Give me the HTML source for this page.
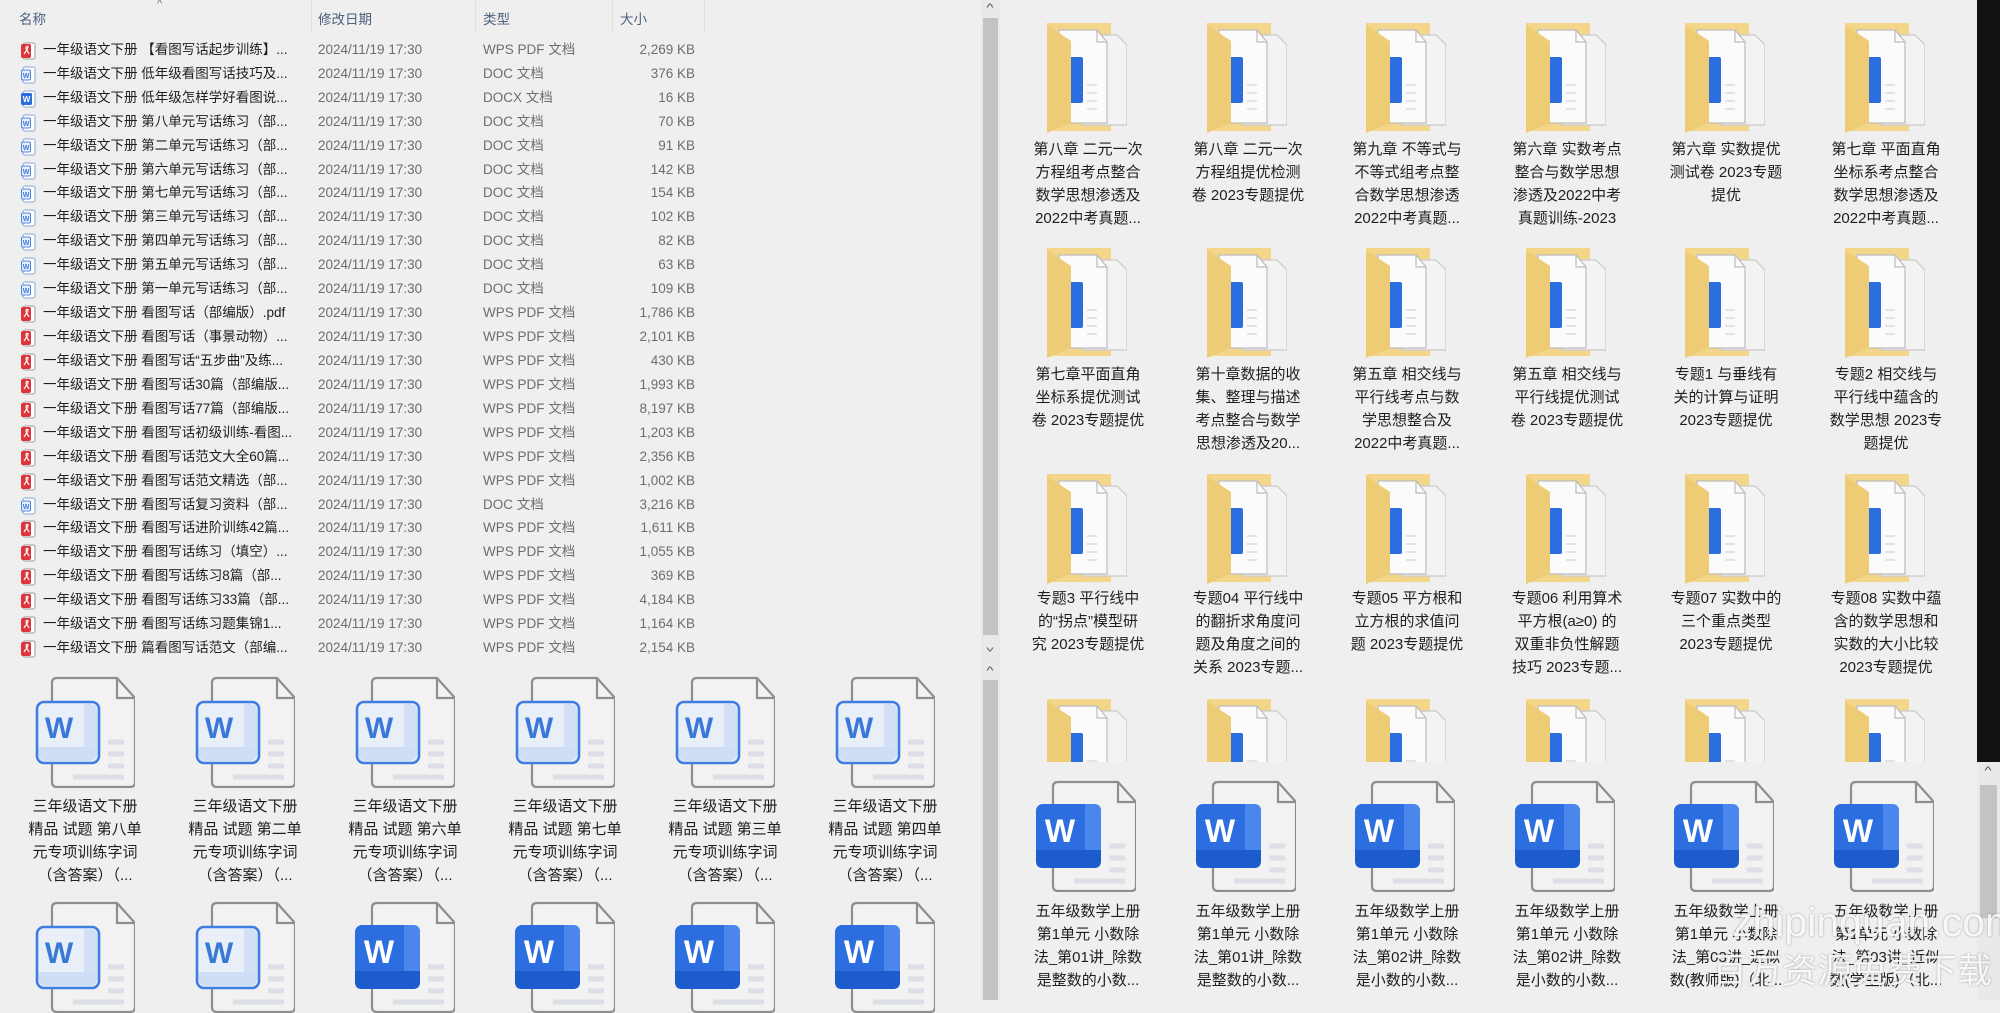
<!DOCTYPE html>
<html><head><meta charset="utf-8">
<style>
*{margin:0;padding:0;box-sizing:border-box}
body{width:2000px;height:1000px;overflow:hidden;background:#efefef;position:relative;font-family:"Liberation Sans","Noto Sans CJK SC",sans-serif;color:#1e1e1e}
.a{position:absolute}
.hd{position:absolute;top:8px;font-size:13.5px;color:#4d6082}
.sep{position:absolute;top:0;width:1px;height:32px;background:#e2e2e2}
.row{position:absolute;left:0;width:980px;height:20px;font-size:13.5px;line-height:20px;white-space:nowrap}
.row svg{position:absolute;left:20px;top:2px}
.row .n{position:absolute;left:43px}
.row .d{position:absolute;left:318px;color:#6d6d6d}
.row .t{position:absolute;left:483px;color:#6d6d6d}
.row .s{position:absolute;right:285px;color:#6d6d6d}
.lb{position:absolute;width:160px;text-align:center;font-size:15px;line-height:23px;color:#1e1e1e;white-space:nowrap}
.ic{position:absolute}
.sb{position:absolute;background:#e9e9e9}
.th{position:absolute;background:#c3c3c3}
.ar{position:absolute;font-size:11px;color:#555;width:18px;text-align:center;transform:scaleX(1.4)}
</style></head><body>
<svg width="0" height="0" style="position:absolute">
<defs>
<symbol id="pdf" viewBox="0 0 16 18"><rect x="3" y="1" width="12" height="16" rx="2" fill="#fff" stroke="#999" stroke-width="1"/><rect x="1" y="2" width="10" height="14" rx="2" fill="#e0343b"/><path d="M4 12 C6 9 8 7 8 5 C8 4 6 4 6 6 C6 8 9 11 9 12" stroke="#fff" stroke-width="1.2" fill="none"/></symbol>
<symbol id="doc" viewBox="0 0 16 18"><rect x="3" y="1" width="12" height="16" rx="2" fill="#fff" stroke="#8aa6d6" stroke-width="1"/><rect x="1.5" y="4" width="9" height="10" rx="1.5" fill="#e6eefb" stroke="#4f86dd" stroke-width="1"/><text x="6" y="12" font-size="7" fill="#3a78d8" text-anchor="middle" font-family="Liberation Sans" font-weight="bold">W</text></symbol>
<symbol id="docx" viewBox="0 0 16 18"><rect x="3" y="1" width="12" height="16" rx="2" fill="#fff" stroke="#8aa6d6" stroke-width="1"/><rect x="1" y="3" width="11" height="12" rx="1.5" fill="#2b6ddf"/><text x="6.5" y="12" font-size="8" fill="#fff" text-anchor="middle" font-family="Liberation Sans" font-weight="bold">W</text></symbol>
<symbol id="fold" viewBox="0 0 80 110">
<path d="M0 0H64V108H0Z" fill="#f3d689"/>
<path d="M36 12H70L80 22V102H36Z" fill="#f3f3f3" stroke="#c9c9c9" stroke-width="1.2"/>
<path d="M12 7H50L60 19V100H12Z" fill="#fbfbfb" stroke="#bcbcbc" stroke-width="1.2"/>
<path d="M50 7V19H60" fill="none" stroke="#bcbcbc" stroke-width="1.2"/>
<rect x="22" y="34" width="14" height="46" rx="2" fill="#2c6de0"/>
<path d="M40 62h10M40 70h10M40 78h10M40 86h10" stroke="#dfe3ea" stroke-width="2"/>
<path d="M0 2L24 18V100L0 110Z" fill="#eecc76"/>
</symbol>
<symbol id="wo" viewBox="0 0 100 112">
<path d="M17 7Q17 2 22 2H82L100 22V106Q100 111 95 111H22Q17 111 17 106Z" fill="#f2f2f2" stroke="#8e8e8e" stroke-width="2.2"/>
<path d="M82 2V22H100" fill="none" stroke="#8e8e8e" stroke-width="2.2"/>
<path d="M73 66h16M73 78h16M73 90h16M38 101h51" stroke="#dcdfe5" stroke-width="5"/>
<rect x="2" y="26" width="62" height="61" rx="7" fill="#e8eff9" stroke="#3f7ee0" stroke-width="2.6"/>
<path d="M49 28h6q7 0 7 7v39h-13z" fill="#d2e0f5"/>
<path d="M3.5 71h58.5v6q0 8-8 8h-42q-8.5 0-8.5-8z" fill="#cfdef4"/>
<text x="24" y="62" font-size="30" font-weight="bold" fill="#3a78d8" text-anchor="middle" font-family="Liberation Sans">W</text>
</symbol>
<symbol id="ws" viewBox="0 0 100 112">
<path d="M17 7Q17 2 22 2H82L100 22V106Q100 111 95 111H22Q17 111 17 106Z" fill="#f2f2f2" stroke="#8e8e8e" stroke-width="2.2"/>
<path d="M82 2V22H100" fill="none" stroke="#8e8e8e" stroke-width="2.2"/>
<path d="M73 66h16M73 78h16M73 90h16M38 101h51" stroke="#dcdfe5" stroke-width="5"/>
<rect x="0" y="24" width="65" height="64" rx="7" fill="#2c6ee0"/>
<path d="M49 24h9q7 0 7 7v42h-16z" fill="#4a86ec"/>
<path d="M0 70h65v11q0 7-7 7h-51q-7 0-7-7z" fill="#1d5ccd"/>
<text x="24" y="62" font-size="32" font-weight="bold" fill="#fff" text-anchor="middle" font-family="Liberation Sans">W</text>
</symbol>
</defs></svg>

<div class="hd" style="left:19px">名称</div>
<div class="a" style="left:157px;top:-2px;font-size:11px;color:#777">^</div>
<div class="sep" style="left:311px"></div>
<div class="hd" style="left:318px">修改日期</div>
<div class="sep" style="left:475px"></div>
<div class="hd" style="left:483px">类型</div>
<div class="sep" style="left:612px"></div>
<div class="hd" style="left:620px">大小</div>
<div class="sep" style="left:704px"></div>

<div class="row" style="top:40px"><svg width="16" height="18"><use href="#pdf"/></svg><span class="n">一年级语文下册 【看图写话起步训练】...</span><span class="d">2024/11/19 17:30</span><span class="t">WPS PDF 文档</span><span class="s">2,269 KB</span></div>
<div class="row" style="top:64px"><svg width="16" height="18"><use href="#doc"/></svg><span class="n">一年级语文下册 低年级看图写话技巧及...</span><span class="d">2024/11/19 17:30</span><span class="t">DOC 文档</span><span class="s">376 KB</span></div>
<div class="row" style="top:88px"><svg width="16" height="18"><use href="#docx"/></svg><span class="n">一年级语文下册 低年级怎样学好看图说...</span><span class="d">2024/11/19 17:30</span><span class="t">DOCX 文档</span><span class="s">16 KB</span></div>
<div class="row" style="top:112px"><svg width="16" height="18"><use href="#doc"/></svg><span class="n">一年级语文下册 第八单元写话练习（部...</span><span class="d">2024/11/19 17:30</span><span class="t">DOC 文档</span><span class="s">70 KB</span></div>
<div class="row" style="top:136px"><svg width="16" height="18"><use href="#doc"/></svg><span class="n">一年级语文下册 第二单元写话练习（部...</span><span class="d">2024/11/19 17:30</span><span class="t">DOC 文档</span><span class="s">91 KB</span></div>
<div class="row" style="top:160px"><svg width="16" height="18"><use href="#doc"/></svg><span class="n">一年级语文下册 第六单元写话练习（部...</span><span class="d">2024/11/19 17:30</span><span class="t">DOC 文档</span><span class="s">142 KB</span></div>
<div class="row" style="top:183px"><svg width="16" height="18"><use href="#doc"/></svg><span class="n">一年级语文下册 第七单元写话练习（部...</span><span class="d">2024/11/19 17:30</span><span class="t">DOC 文档</span><span class="s">154 KB</span></div>
<div class="row" style="top:207px"><svg width="16" height="18"><use href="#doc"/></svg><span class="n">一年级语文下册 第三单元写话练习（部...</span><span class="d">2024/11/19 17:30</span><span class="t">DOC 文档</span><span class="s">102 KB</span></div>
<div class="row" style="top:231px"><svg width="16" height="18"><use href="#doc"/></svg><span class="n">一年级语文下册 第四单元写话练习（部...</span><span class="d">2024/11/19 17:30</span><span class="t">DOC 文档</span><span class="s">82 KB</span></div>
<div class="row" style="top:255px"><svg width="16" height="18"><use href="#doc"/></svg><span class="n">一年级语文下册 第五单元写话练习（部...</span><span class="d">2024/11/19 17:30</span><span class="t">DOC 文档</span><span class="s">63 KB</span></div>
<div class="row" style="top:279px"><svg width="16" height="18"><use href="#doc"/></svg><span class="n">一年级语文下册 第一单元写话练习（部...</span><span class="d">2024/11/19 17:30</span><span class="t">DOC 文档</span><span class="s">109 KB</span></div>
<div class="row" style="top:303px"><svg width="16" height="18"><use href="#pdf"/></svg><span class="n">一年级语文下册 看图写话（部编版）.pdf</span><span class="d">2024/11/19 17:30</span><span class="t">WPS PDF 文档</span><span class="s">1,786 KB</span></div>
<div class="row" style="top:327px"><svg width="16" height="18"><use href="#pdf"/></svg><span class="n">一年级语文下册 看图写话（事景动物）...</span><span class="d">2024/11/19 17:30</span><span class="t">WPS PDF 文档</span><span class="s">2,101 KB</span></div>
<div class="row" style="top:351px"><svg width="16" height="18"><use href="#pdf"/></svg><span class="n">一年级语文下册 看图写话“五步曲”及练...</span><span class="d">2024/11/19 17:30</span><span class="t">WPS PDF 文档</span><span class="s">430 KB</span></div>
<div class="row" style="top:375px"><svg width="16" height="18"><use href="#pdf"/></svg><span class="n">一年级语文下册 看图写话30篇（部编版...</span><span class="d">2024/11/19 17:30</span><span class="t">WPS PDF 文档</span><span class="s">1,993 KB</span></div>
<div class="row" style="top:399px"><svg width="16" height="18"><use href="#pdf"/></svg><span class="n">一年级语文下册 看图写话77篇（部编版...</span><span class="d">2024/11/19 17:30</span><span class="t">WPS PDF 文档</span><span class="s">8,197 KB</span></div>
<div class="row" style="top:423px"><svg width="16" height="18"><use href="#pdf"/></svg><span class="n">一年级语文下册 看图写话初级训练-看图...</span><span class="d">2024/11/19 17:30</span><span class="t">WPS PDF 文档</span><span class="s">1,203 KB</span></div>
<div class="row" style="top:447px"><svg width="16" height="18"><use href="#pdf"/></svg><span class="n">一年级语文下册 看图写话范文大全60篇...</span><span class="d">2024/11/19 17:30</span><span class="t">WPS PDF 文档</span><span class="s">2,356 KB</span></div>
<div class="row" style="top:471px"><svg width="16" height="18"><use href="#pdf"/></svg><span class="n">一年级语文下册 看图写话范文精选（部...</span><span class="d">2024/11/19 17:30</span><span class="t">WPS PDF 文档</span><span class="s">1,002 KB</span></div>
<div class="row" style="top:495px"><svg width="16" height="18"><use href="#doc"/></svg><span class="n">一年级语文下册 看图写话复习资料（部...</span><span class="d">2024/11/19 17:30</span><span class="t">DOC 文档</span><span class="s">3,216 KB</span></div>
<div class="row" style="top:518px"><svg width="16" height="18"><use href="#pdf"/></svg><span class="n">一年级语文下册 看图写话进阶训练42篇...</span><span class="d">2024/11/19 17:30</span><span class="t">WPS PDF 文档</span><span class="s">1,611 KB</span></div>
<div class="row" style="top:542px"><svg width="16" height="18"><use href="#pdf"/></svg><span class="n">一年级语文下册 看图写话练习（填空）...</span><span class="d">2024/11/19 17:30</span><span class="t">WPS PDF 文档</span><span class="s">1,055 KB</span></div>
<div class="row" style="top:566px"><svg width="16" height="18"><use href="#pdf"/></svg><span class="n">一年级语文下册 看图写话练习8篇（部...</span><span class="d">2024/11/19 17:30</span><span class="t">WPS PDF 文档</span><span class="s">369 KB</span></div>
<div class="row" style="top:590px"><svg width="16" height="18"><use href="#pdf"/></svg><span class="n">一年级语文下册 看图写话练习33篇（部...</span><span class="d">2024/11/19 17:30</span><span class="t">WPS PDF 文档</span><span class="s">4,184 KB</span></div>
<div class="row" style="top:614px"><svg width="16" height="18"><use href="#pdf"/></svg><span class="n">一年级语文下册 看图写话练习题集锦1...</span><span class="d">2024/11/19 17:30</span><span class="t">WPS PDF 文档</span><span class="s">1,164 KB</span></div>
<div class="row" style="top:638px"><svg width="16" height="18"><use href="#pdf"/></svg><span class="n">一年级语文下册 篇看图写话范文（部编...</span><span class="d">2024/11/19 17:30</span><span class="t">WPS PDF 文档</span><span class="s">2,154 KB</span></div>

<svg class="ic" style="left:35px;top:676px" width="100" height="112"><use href="#wo"/></svg>
<svg class="ic" style="left:195px;top:676px" width="100" height="112"><use href="#wo"/></svg>
<svg class="ic" style="left:355px;top:676px" width="100" height="112"><use href="#wo"/></svg>
<svg class="ic" style="left:515px;top:676px" width="100" height="112"><use href="#wo"/></svg>
<svg class="ic" style="left:675px;top:676px" width="100" height="112"><use href="#wo"/></svg>
<svg class="ic" style="left:835px;top:676px" width="100" height="112"><use href="#wo"/></svg>
<div class="lb" style="left:5px;top:795px">三年级语文下册<br>精品 试题 第八单<br>元专项训练字词<br>（含答案）（...</div>
<div class="lb" style="left:165px;top:795px">三年级语文下册<br>精品 试题 第二单<br>元专项训练字词<br>（含答案）（...</div>
<div class="lb" style="left:325px;top:795px">三年级语文下册<br>精品 试题 第六单<br>元专项训练字词<br>（含答案）（...</div>
<div class="lb" style="left:485px;top:795px">三年级语文下册<br>精品 试题 第七单<br>元专项训练字词<br>（含答案）（...</div>
<div class="lb" style="left:645px;top:795px">三年级语文下册<br>精品 试题 第三单<br>元专项训练字词<br>（含答案）（...</div>
<div class="lb" style="left:805px;top:795px">三年级语文下册<br>精品 试题 第四单<br>元专项训练字词<br>（含答案）（...</div>
<svg class="ic" style="left:35px;top:901px" width="100" height="112"><use href="#wo"/></svg>
<svg class="ic" style="left:195px;top:901px" width="100" height="112"><use href="#wo"/></svg>
<svg class="ic" style="left:355px;top:901px" width="100" height="112"><use href="#ws"/></svg>
<svg class="ic" style="left:515px;top:901px" width="100" height="112"><use href="#ws"/></svg>
<svg class="ic" style="left:675px;top:901px" width="100" height="112"><use href="#ws"/></svg>
<svg class="ic" style="left:835px;top:901px" width="100" height="112"><use href="#ws"/></svg>

<div class="sb" style="left:981px;top:0;width:19px;height:1000px"></div>
<div class="ar" style="left:981px;top:2px">^</div>
<div class="th" style="left:983px;top:18px;width:15px;height:617px"></div>
<div class="ar" style="left:981px;top:641px;transform:scaleX(1.4) rotate(180deg)">^</div>
<div class="ar" style="left:981px;top:665px">^</div>
<div class="th" style="left:983px;top:680px;width:15px;height:320px"></div>

<div class="a" style="left:1000px;top:0;width:977px;height:762px;overflow:hidden">
<svg class="ic" style="left:47px;top:23px" width="80" height="110"><use href="#fold"/></svg>
<svg class="ic" style="left:207px;top:23px" width="80" height="110"><use href="#fold"/></svg>
<svg class="ic" style="left:366px;top:23px" width="80" height="110"><use href="#fold"/></svg>
<svg class="ic" style="left:526px;top:23px" width="80" height="110"><use href="#fold"/></svg>
<svg class="ic" style="left:685px;top:23px" width="80" height="110"><use href="#fold"/></svg>
<svg class="ic" style="left:845px;top:23px" width="80" height="110"><use href="#fold"/></svg>
<div class="lb" style="left:8px;top:138px">第八章 二元一次<br>方程组考点整合<br>数学思想渗透及<br>2022中考真题...</div>
<div class="lb" style="left:168px;top:138px">第八章 二元一次<br>方程组提优检测<br>卷 2023专题提优</div>
<div class="lb" style="left:327px;top:138px">第九章 不等式与<br>不等式组考点整<br>合数学思想渗透<br>2022中考真题...</div>
<div class="lb" style="left:487px;top:138px">第六章 实数考点<br>整合与数学思想<br>渗透及2022中考<br>真题训练-2023</div>
<div class="lb" style="left:646px;top:138px">第六章 实数提优<br>测试卷 2023专题<br>提优</div>
<div class="lb" style="left:806px;top:138px">第七章 平面直角<br>坐标系考点整合<br>数学思想渗透及<br>2022中考真题...</div>

<svg class="ic" style="left:47px;top:248px" width="80" height="110"><use href="#fold"/></svg>
<svg class="ic" style="left:207px;top:248px" width="80" height="110"><use href="#fold"/></svg>
<svg class="ic" style="left:366px;top:248px" width="80" height="110"><use href="#fold"/></svg>
<svg class="ic" style="left:526px;top:248px" width="80" height="110"><use href="#fold"/></svg>
<svg class="ic" style="left:685px;top:248px" width="80" height="110"><use href="#fold"/></svg>
<svg class="ic" style="left:845px;top:248px" width="80" height="110"><use href="#fold"/></svg>
<div class="lb" style="left:8px;top:363px">第七章平面直角<br>坐标系提优测试<br>卷 2023专题提优</div>
<div class="lb" style="left:168px;top:363px">第十章数据的收<br>集、整理与描述<br>考点整合与数学<br>思想渗透及20...</div>
<div class="lb" style="left:327px;top:363px">第五章 相交线与<br>平行线考点与数<br>学思想整合及<br>2022中考真题...</div>
<div class="lb" style="left:487px;top:363px">第五章 相交线与<br>平行线提优测试<br>卷 2023专题提优</div>
<div class="lb" style="left:646px;top:363px">专题1 与垂线有<br>关的计算与证明<br>2023专题提优</div>
<div class="lb" style="left:806px;top:363px">专题2 相交线与<br>平行线中蕴含的<br>数学思想 2023专<br>题提优</div>

<svg class="ic" style="left:47px;top:474px" width="80" height="110"><use href="#fold"/></svg>
<svg class="ic" style="left:207px;top:474px" width="80" height="110"><use href="#fold"/></svg>
<svg class="ic" style="left:366px;top:474px" width="80" height="110"><use href="#fold"/></svg>
<svg class="ic" style="left:526px;top:474px" width="80" height="110"><use href="#fold"/></svg>
<svg class="ic" style="left:685px;top:474px" width="80" height="110"><use href="#fold"/></svg>
<svg class="ic" style="left:845px;top:474px" width="80" height="110"><use href="#fold"/></svg>
<div class="lb" style="left:8px;top:587px">专题3 平行线中<br>的“拐点”模型研<br>究 2023专题提优</div>
<div class="lb" style="left:168px;top:587px">专题04 平行线中<br>的翻折求角度问<br>题及角度之间的<br>关系 2023专题...</div>
<div class="lb" style="left:327px;top:587px">专题05 平方根和<br>立方根的求值问<br>题 2023专题提优</div>
<div class="lb" style="left:487px;top:587px">专题06 利用算术<br>平方根(a≥0) 的<br>双重非负性解题<br>技巧 2023专题...</div>
<div class="lb" style="left:646px;top:587px">专题07 实数中的<br>三个重点类型<br>2023专题提优</div>
<div class="lb" style="left:806px;top:587px">专题08 实数中蕴<br>含的数学思想和<br>实数的大小比较<br>2023专题提优</div>

<svg class="ic" style="left:47px;top:699px" width="80" height="110"><use href="#fold"/></svg>
<svg class="ic" style="left:207px;top:699px" width="80" height="110"><use href="#fold"/></svg>
<svg class="ic" style="left:366px;top:699px" width="80" height="110"><use href="#fold"/></svg>
<svg class="ic" style="left:526px;top:699px" width="80" height="110"><use href="#fold"/></svg>
<svg class="ic" style="left:685px;top:699px" width="80" height="110"><use href="#fold"/></svg>
<svg class="ic" style="left:845px;top:699px" width="80" height="110"><use href="#fold"/></svg>
</div>

<svg class="ic" style="left:1036px;top:780px" width="100" height="112"><use href="#ws"/></svg>
<svg class="ic" style="left:1196px;top:780px" width="100" height="112"><use href="#ws"/></svg>
<svg class="ic" style="left:1355px;top:780px" width="100" height="112"><use href="#ws"/></svg>
<svg class="ic" style="left:1515px;top:780px" width="100" height="112"><use href="#ws"/></svg>
<svg class="ic" style="left:1674px;top:780px" width="100" height="112"><use href="#ws"/></svg>
<svg class="ic" style="left:1834px;top:780px" width="100" height="112"><use href="#ws"/></svg>
<div class="lb" style="left:1008px;top:900px">五年级数学上册<br>第1单元 小数除<br>法_第01讲_除数<br>是整数的小数...</div>
<div class="lb" style="left:1168px;top:900px">五年级数学上册<br>第1单元 小数除<br>法_第01讲_除数<br>是整数的小数...</div>
<div class="lb" style="left:1327px;top:900px">五年级数学上册<br>第1单元 小数除<br>法_第02讲_除数<br>是小数的小数...</div>
<div class="lb" style="left:1487px;top:900px">五年级数学上册<br>第1单元 小数除<br>法_第02讲_除数<br>是小数的小数...</div>
<div class="lb" style="left:1646px;top:900px">五年级数学上册<br>第1单元 小数除<br>法_第03讲_近似<br>数(教师版)（北...</div>
<div class="lb" style="left:1806px;top:900px">五年级数学上册<br>第1单元 小数除<br>法_第03讲_近似<br>数(学生版)（北...</div>

<div class="a" style="left:1977px;top:0;width:23px;height:762px;background:#111"></div>
<div class="sb" style="left:1977px;top:762px;width:23px;height:238px"></div>
<div class="ar" style="left:1979px;top:765px">^</div>
<div class="th" style="left:1980px;top:785px;width:17px;height:133px"></div>

<div class="a" style="left:1732px;top:900px;font-size:41px;line-height:44px;color:rgba(255,255,255,0.9);text-shadow:0 0 2px rgba(0,0,0,0.35);white-space:nowrap">zhipinquan.com</div>
<div class="a" style="left:1712px;top:952px;font-size:35px;line-height:40px;color:rgba(255,255,255,0.9);text-shadow:0 0 2px rgba(0,0,0,0.35);white-space:nowrap">百万资源免费下载</div>
</body></html>
